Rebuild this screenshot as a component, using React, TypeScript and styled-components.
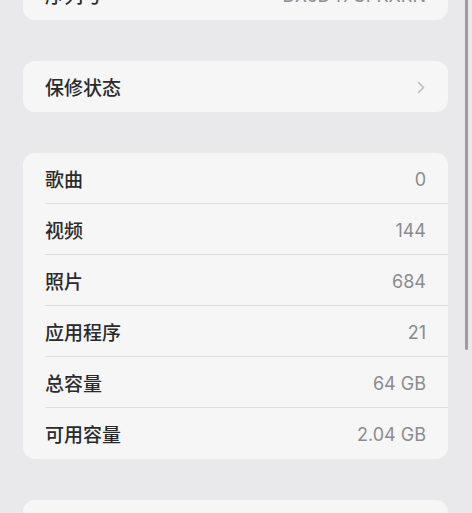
import React from "react";
import styled, { createGlobalStyle } from "styled-components";

const Global = createGlobalStyle`
  html, body { margin: 0; padding: 0; background: #e9e9eb; }
  body { font-family: "Noto Sans CJK SC", "Noto Sans", sans-serif; }
`;

const Screen = styled.div`
  position: relative;
  width: 472px;
  height: 513px;
  overflow: hidden;
  background: #e9e9eb;
`;

const Column = styled.div`
  display: flex;
  flex-direction: column;
  gap: 41px;
  padding: 0 24px 0 23px;
  margin-top: -31px;
`;

const Card = styled.div`
  background: #f6f6f6;
  border-radius: 12px;
  overflow: hidden;
  display: flex;
  flex-direction: column;
`;

const Row = styled.div<{ $last?: boolean }>`
  position: relative;
  height: 51px;
  display: flex;
  align-items: center;
  justify-content: space-between;
  padding: 0 22px;
  box-sizing: border-box;
  &::after {
    content: "";
    display: ${(p) => (p.$last ? "none" : "block")};
    position: absolute;
    left: 22px;
    right: 0;
    bottom: 0;
    height: 1px;
    background: #dedee0;
  }
`;

const Label = styled.span`
  font-family: "Noto Sans CJK SC", "Noto Sans", sans-serif;
  font-size: 19px;
  font-weight: 500;
  color: #2a2a2c;
  line-height: 1;
`;

const Value = styled.span`
  font-family: Inter, "Noto Sans", sans-serif;
  font-size: 18px;
  font-weight: 400;
  color: #8b8b8f;
  line-height: 1;
  padding-top: 3px;
`;

const Chevron = styled.svg`
  width: 8px;
  height: 13px;
  margin-right: 1px;
  margin-top: 1px;
`;

const ScrollThumb = styled.div`
  position: absolute;
  left: 465px;
  top: 0;
  width: 3px;
  height: 350px;
  border-radius: 0 0 2px 2px;
  background: #9d9d9f;
`;

type Item = { label: string; value?: string; chevron?: boolean };

const groups: Item[][] = [
  [{ label: "序列号", value: "DX6D47GFKXRN" }],
  [{ label: "保修状态", chevron: true }],
  [
    { label: "歌曲", value: "0" },
    { label: "视频", value: "144" },
    { label: "照片", value: "684" },
    { label: "应用程序", value: "21" },
    { label: "总容量", value: "64 GB" },
    { label: "可用容量", value: "2.04 GB" },
  ],
  [{ label: "" }],
];

export default function App() {
  return (
    <>
      <Global />
      <Screen>
        <Column>
          {groups.map((g, gi) => (
            <Card key={gi}>
              {g.map((it, i) => (
                <Row key={i} $last={i === g.length - 1}>
                  <Label>{it.label}</Label>
                  {it.value !== undefined && <Value>{it.value}</Value>}
                  {it.chevron && (
                    <Chevron viewBox="0 0 8 13">
                      <path
                        d="M1.5 1.5 L6.5 6.5 L1.5 11.5"
                        fill="none"
                        stroke="#bdbdc0"
                        strokeWidth="1.6"
                        strokeLinecap="round"
                        strokeLinejoin="round"
                      />
                    </Chevron>
                  )}
                </Row>
              ))}
            </Card>
          ))}
        </Column>
        <ScrollThumb />
      </Screen>
    </>
  );
}
